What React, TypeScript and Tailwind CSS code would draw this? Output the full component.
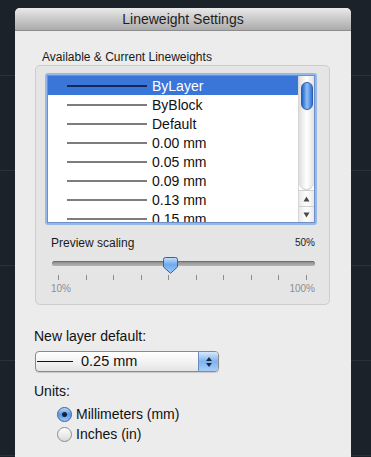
import React from "react";

const ROWS = ["ByLayer", "ByBlock", "Default", "0.00 mm", "0.05 mm", "0.09 mm", "0.13 mm", "0.15 mm"];
const TICKS = Array.from({ length: 10 }, (_, i) => i);

function ScrollArrow({ up }: { up: boolean }) {
  return (
    <div className="flex h-[16px] items-center justify-center border-t border-[#cfcfcf] bg-gradient-to-r from-[#e9e9e9] via-white to-[#e9e9e9]">
      <svg width="7" height="6" viewBox="0 0 7 6" aria-hidden="true">
        <path d={up ? "M3.5 0.5 L6.5 5.5 L0.5 5.5 Z" : "M0.5 0.5 L6.5 0.5 L3.5 5.5 Z"} fill="#4a4a4a" />
      </svg>
    </div>
  );
}

function LineweightList() {
  return (
    <div className="h-[152px] w-[272px] rounded-[3px] bg-[#93b8ea] p-[2px]">
      <div className="flex h-full border border-[#6f90c4] bg-white">
        <div className="flex min-w-0 flex-1 flex-col overflow-hidden">
          {ROWS.map((label, i) => {
            const selected = i === 0;
            return (
              <div
                key={label}
                className={`flex h-[19px] shrink-0 items-center ${selected ? "bg-[#3a76d8] text-white" : "text-[#111]"}`}
              >
                <span className={`ml-[19px] h-[2px] w-[80px] shrink-0 ${selected ? "bg-[#13285e]" : "bg-[#7d7d7d]"}`} />
                <span className="ml-[5px] text-[14px] leading-none">{label}</span>
              </div>
            );
          })}
        </div>
        <div className="flex w-[16px] shrink-0 flex-col border-l border-[#d6d6d6]">
          <div className="flex flex-1 flex-col rounded-b-[8px] bg-gradient-to-r from-[#dedede] via-white to-[#e2e2e2] pt-[6px] shadow-[inset_0_-1px_0_#cfcfcf]">
            <div className="mx-auto h-[28px] w-[12px] rounded-full border border-[#2d5fae] bg-gradient-to-r from-[#2560c8] via-[#8ec0f6] to-[#3572d6]" />
          </div>
          <ScrollArrow up />
          <ScrollArrow up={false} />
        </div>
      </div>
    </div>
  );
}

function PreviewSlider() {
  return (
    <div className="pl-[15px] pr-[14px]">
      <div className="mt-[11px] flex items-center justify-between leading-[14px]">
        <span className="text-[12px] text-[#1a1a1a]">Preview scaling</span>
        <span className="text-[10px] text-[#222]">50%</span>
      </div>
      <div className="relative mt-[3px] h-[20px]">
        <div className="absolute left-px right-0 top-[8px] h-[5px] rounded-full bg-gradient-to-b from-[#8a8a8a] to-[#b4b4b4] shadow-[inset_0_1px_1px_rgba(0,0,0,0.25)]" />
        <svg className="absolute left-[112px] top-[4px]" width="15" height="17" viewBox="0 0 15 17" aria-hidden="true">
          <defs>
            <linearGradient id="thumbGrad" x1="0" y1="0" x2="0" y2="1">
              <stop offset="0%" stopColor="#c7e0fb" />
              <stop offset="45%" stopColor="#6fa9ee" />
              <stop offset="100%" stopColor="#9ccbf8" />
            </linearGradient>
          </defs>
          <path d="M2.5 0.5 H12.5 Q14.5 0.5 14.5 2.5 V10 L7.5 16.3 L0.5 10 V2.5 Q0.5 0.5 2.5 0.5 Z" fill="url(#thumbGrad)" stroke="#36609f" />
        </svg>
      </div>
      <div className="mt-[2px] flex h-[5px] justify-between pl-[7px] pr-[8px]">
        {TICKS.map((t) => (
          <span key={t} className="h-[5px] w-px bg-[#8c8c8c]" />
        ))}
      </div>
      <div className="mt-[3px] flex justify-between text-[10px] leading-[12px] text-[#8d8d8d]">
        <span>10%</span>
        <span>100%</span>
      </div>
    </div>
  );
}

function PopupButton() {
  return (
    <div className="ml-[20px] mt-[7px] flex h-[21px] w-[184px] overflow-hidden rounded-[4px] border border-[#8a8a8a] bg-gradient-to-b from-white via-[#f3f3f3] to-[#e4e4e4] shadow-[0_1px_1px_rgba(0,0,0,0.15)]">
      <div className="flex flex-1 items-center">
        <span className="ml-px h-px w-[36px] bg-[#111]" />
        <span className="ml-[8px] text-[14.5px] leading-none text-[#111]">0.25 mm</span>
      </div>
      <div className="flex w-[20px] flex-col items-center justify-center gap-[2px] border-l border-[#6b8cc0] bg-gradient-to-b from-[#d6e8fc] via-[#7fb3f0] to-[#a8cdf7]">
        <svg width="6" height="4" viewBox="0 0 6 4" aria-hidden="true">
          <path d="M3 0 L6 4 L0 4 Z" fill="#1b2a44" />
        </svg>
        <svg width="6" height="4" viewBox="0 0 6 4" aria-hidden="true">
          <path d="M0 0 L6 0 L3 4 Z" fill="#1b2a44" />
        </svg>
      </div>
    </div>
  );
}

function Radio({ checked, label }: { checked: boolean; label: string }) {
  return (
    <div className="flex h-[20px] items-center">
      {checked ? (
        <span className="flex h-[15px] w-[15px] items-center justify-center rounded-full border border-[#3c5f98] bg-gradient-to-b from-[#b9d8f8] via-[#5c98e4] to-[#9ac8f6]">
          <span className="h-[5px] w-[5px] rounded-full bg-[#17223a]" />
        </span>
      ) : (
        <span className="h-[15px] w-[15px] rounded-full border border-[#8c8c8c] bg-gradient-to-b from-white to-[#dadada]" />
      )}
      <span className="ml-[4px] text-[14px] leading-none text-[#111]">{label}</span>
    </div>
  );
}

export default function App() {
  return (
    <div
      className="h-[457px] w-[371px] overflow-hidden bg-[#1c222a] bg-[linear-gradient(to_bottom,#29313b_1px,transparent_1px)] bg-[length:100%_95px] bg-[position:0_75px] pl-[15px] pt-[8px]"
      style={{ fontFamily: '"Liberation Sans", Arial, sans-serif' }}
    >
      <div className="flex h-[449px] w-[336px] flex-col overflow-hidden rounded-t-[5px] bg-[#ececec]">
        <div className="h-[23px] shrink-0 border-b border-[#8c8c8c] bg-gradient-to-b from-[#e9e9e9] to-[#ababab] text-center text-[14px] leading-[23px] text-[#1e1e1e]">
          Lineweight Settings
        </div>

        <div className="ml-[27px] mt-[19px] text-[12px] leading-[14px] text-[#1a1a1a]">
          Available &amp; Current Lineweights
        </div>
        <div className="ml-[20px] mt-px w-[295px] rounded-[5px] border border-[#cdcdcd] bg-[#e5e5e5] pb-[9px] pt-[7px]">
          <div className="pl-[9px]">
            <LineweightList />
          </div>
          <PreviewSlider />
        </div>

        <div className="ml-[19px] mt-[23px] text-[14px] leading-[16px] text-[#111]">New layer default:</div>
        <PopupButton />

        <div className="ml-[19px] mt-[11px] text-[14px] leading-[16px] text-[#111]">Units:</div>
        <div className="ml-[42px] mt-[5px] flex flex-col">
          <Radio checked label="Millimeters (mm)" />
          <Radio checked={false} label="Inches (in)" />
        </div>
      </div>
    </div>
  );
}
